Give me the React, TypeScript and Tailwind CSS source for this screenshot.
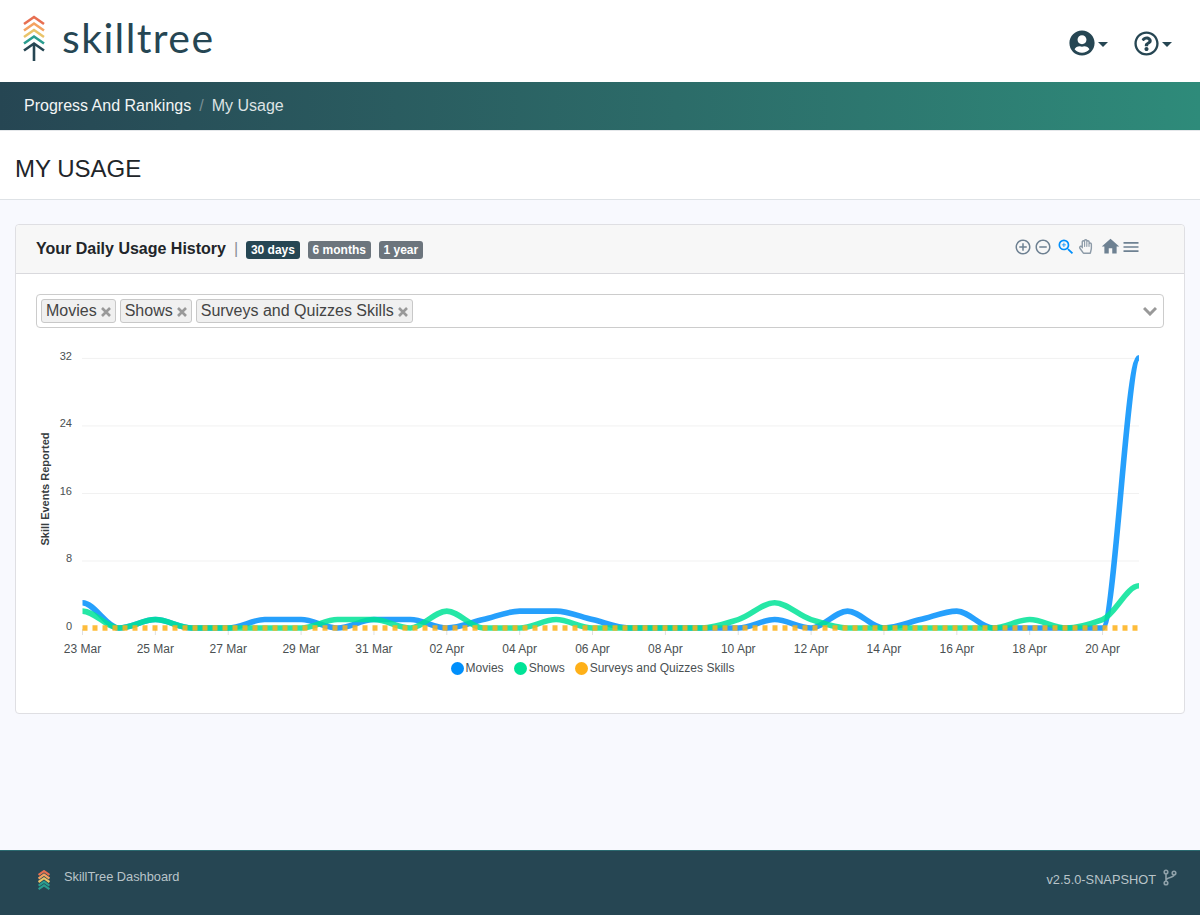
import { FaUserCircle, FaRegQuestionCircle, FaRegHandPaper } from "react-icons/fa";
import { MdOutlineAddCircleOutline, MdOutlineRemoveCircleOutline, MdZoomIn, MdHome, MdMenu } from "react-icons/md";

const X0 = 82.5;
const DX = 36.43;
const Y0 = 628;
const UNIT = 8.44;

const movies = [3, 0, 1, 0, 0, 1, 1, 0, 1, 1, 0, 1, 2, 2, 1, 0, 0, 0, 0, 1, 0, 2, 0, 1, 2, 0, 0, 0, 0, 32];
const shows = [2, 0, 1, 0, 0, 0, 0, 1, 1, 0, 2, 0, 0, 1, 0, 0, 0, 0, 1, 3, 1, 0, 0, 0, 0, 0, 1, 0, 1, 5];

function monotonePath(data: number[]) {
  const pts = data.map((v, i) => [X0 + i * DX, Y0 - v * UNIT]);
  const slopes = pts.slice(1).map((p, i) => (p[1] - pts[i][1]) / DX);
  const tangents = pts.map((_, i) => {
    if (i === 0 || i === pts.length - 1) return 0;
    const a = slopes[i - 1];
    const b = slopes[i];
    if (a * b <= 0) return 0;
    return (2 * a * b) / (a + b);
  });
  let d = `M${pts[0][0]},${pts[0][1]}`;
  for (let i = 1; i < pts.length; i++) {
    const h = DX / 3;
    d += ` C${pts[i - 1][0] + h},${pts[i - 1][1] + tangents[i - 1] * h} ${pts[i][0] - h},${pts[i][1] - tangents[i] * h} ${pts[i][0]},${pts[i][1]}`;
  }
  return d;
}

const xLabels = ["23 Mar", "25 Mar", "27 Mar", "29 Mar", "31 Mar", "02 Apr", "04 Apr", "06 Apr", "08 Apr", "10 Apr", "12 Apr", "14 Apr", "16 Apr", "18 Apr", "20 Apr"];
const yLabels = [32, 24, 16, 8, 0];

function Chevrons({ stem }: { stem?: boolean }) {
  return (
    <>
      <path d="M1 9 L11 2 L21 9" stroke="#E76F51" />
      <path d="M1 15.5 L11 8.5 L21 15.5" stroke="#F4A261" />
      <path d="M1 22 L11 15 L21 22" stroke="#E9C46A" />
      <path d="M1 28.5 L11 21.5 L21 28.5" stroke="#2A9D8F" />
      {stem && <path d="M1 35.5 L11 28.5 L21 35.5 M11 28.5 L11 46" stroke="#264653" />}
    </>
  );
}

function Chart() {
  return (
    <svg width={1128} height={320} viewBox="36 340 1128 320" className="block" fontFamily="'Liberation Sans', Arial, sans-serif">
      {yLabels.slice(0, 4).map((v) => (
        <line key={v} x1={82} x2={1139} y1={Y0 - v * UNIT + 0.5} y2={Y0 - v * UNIT + 0.5} stroke="#f1f1f1" />
      ))}
      {yLabels.map((v) => (
        <text key={v} x={72} y={Y0 - v * UNIT + 1.7} textAnchor="end" fontSize={11} fill="#4a5052">
          {v}
        </text>
      ))}
      <text transform="translate(49 489) rotate(-90)" textAnchor="middle" fontSize={11} fontWeight={700} fill="#373d3f">
        Skill Events Reported
      </text>
      {xLabels.map((l, i) => {
        const x = X0 + i * 2 * DX;
        return (
          <g key={l}>
            <line x1={x} x2={x} y1={629} y2={635} stroke="#e0e0e0" />
            <text x={x} y={653} textAnchor="middle" fontSize={12} fill="#4a5052">
              {l}
            </text>
          </g>
        );
      })}
      <path d={monotonePath(movies)} fill="none" stroke="#008FFB" strokeOpacity={0.85} strokeWidth={5.6} />
      <path d={monotonePath(shows)} fill="none" stroke="#00E396" strokeOpacity={0.85} strokeWidth={5.6} />
      <line x1={X0} x2={1139} y1={Y0} y2={Y0} stroke="#FEB019" strokeOpacity={0.85} strokeWidth={5.5} strokeDasharray="5 5" />
    </svg>
  );
}

function Tag({ label }: { label: string }) {
  return (
    <span className="flex items-center h-[24px] px-[4px] gap-[4px] rounded-[3px] border border-[#c8c8c8] bg-[#f0f0f0] text-[16px] text-[#444]">
      {label}
      <svg width={10} height={10} viewBox="0 0 10 10" fill="none" stroke="#999" strokeWidth={2.6} className="mt-[1px]">
        <path d="M1 1 L9 9 M9 1 L1 9" />
      </svg>
    </span>
  );
}

function Legend({ color, label }: { color: string; label: string }) {
  return (
    <span className="flex items-center gap-[2px]">
      <span className={`w-[13px] h-[13px] rounded-full ${color}`} />
      {label}
    </span>
  );
}

export default function App() {
  return (
    <div className="min-h-[915px] flex flex-col bg-[#f8f9fe] text-[#212529] font-['Liberation_Sans',Arial,sans-serif]">
      <header className="h-[82px] bg-white flex items-center justify-between pl-[23px] pr-[28px]">
        <div className="flex items-center gap-[17px] -mt-[4px]">
          <svg width={22} height={48} viewBox="0 0 22 48" fill="none" strokeWidth={2.6}>
            <Chevrons stem />
          </svg>
          <span className="font-['Lato',sans-serif] font-normal text-[41px] leading-none tracking-[1.4px] text-[#264653] -mt-[3px]">
            skilltree
          </span>
        </div>
        <div className="flex items-center text-[#264653] mt-[4px]">
          <FaUserCircle size={26} />
          <span className="ml-[3px] mt-[3px] w-0 h-0 border-x-[5px] border-x-transparent border-t-[5px] border-t-[#264653]" />
          <FaRegQuestionCircle size={25} className="ml-[26px]" />
          <span className="ml-[3px] mt-[3px] w-0 h-0 border-x-[5px] border-x-transparent border-t-[5px] border-t-[#264653]" />
        </div>
      </header>

      <nav className="h-[49px] flex items-center gap-[8px] px-[24px] bg-gradient-to-r from-[#264653] to-[#2e8b7a] border-b border-[#e4e7ea] text-[16px] text-[#f2f5f5]">
        <span>Progress And Rankings</span>
        <span className="text-[#7a8f95]">/</span>
        <span className="text-[#dde3e4]">My Usage</span>
      </nav>

      <section className="h-[69px] pt-[8px] bg-white border-b border-[#dee2e6] flex items-center px-[15px] text-[24px]">MY USAGE</section>

      <main className="px-[15px] pt-[24px]">
        <div className="bg-white border border-[#dfdfe3] rounded-[4px]">
          <div className="h-[49px] bg-[#f7f7f7] border-b border-[#d9d9dd] flex items-center pl-[20px] rounded-t-[4px]">
            <span className="text-[16px] font-bold">Your Daily Usage History</span>
            <span className="ml-[8px] text-[#8a8f94] text-[16px]">|</span>
            <span className="ml-[8px] h-[18px] px-[4.8px] flex items-center rounded-[3px] bg-[#264653] text-white text-[12px] font-bold mt-[2px]">30 days</span>
            <span className="ml-[8px] h-[18px] px-[4.8px] flex items-center rounded-[3px] bg-[#6c757d] text-white text-[12px] font-bold mt-[2px]">6 months</span>
            <span className="ml-[8px] h-[18px] px-[4.8px] flex items-center rounded-[3px] bg-[#6c757d] text-white text-[12px] font-bold mt-[2px]">1 year</span>
            <div className="ml-auto mr-[43px] -mt-[5px] flex items-center text-[#6e8192]">
              <MdOutlineAddCircleOutline size={18} />
              <MdOutlineRemoveCircleOutline size={18} className="ml-[2px]" />
              <MdZoomIn size={20} className="ml-[4px] text-[#008ffb]" />
              <FaRegHandPaper size={15} className="ml-[2px] text-[#8d9ba8]" />
              <MdHome size={21} className="ml-[7px]" />
              <MdMenu size={20} className="ml-[0px]" />
            </div>
          </div>
          <div className="px-[20px] pt-[20px] pb-[37px]">
            <div className="h-[34px] border border-[#ccc] rounded-[4px] flex items-center gap-[4px] px-[4px]">
              <Tag label="Movies" />
              <Tag label="Shows" />
              <Tag label="Surveys and Quizzes Skills" />
              <svg width={14} height={10} viewBox="0 0 14 10" fill="none" stroke="#999" strokeWidth={3} className="ml-auto mr-[2px]">
                <path d="M1 2 L7 8 L13 2" />
              </svg>
            </div>
            <div className="mt-[12px]">
              <Chart />
            </div>
            <div className="h-[16px] flex items-center justify-center gap-[10px] pr-[15px] text-[12px] text-[#4a5052]">
              <Legend color="bg-[#008ffb]" label="Movies" />
              <Legend color="bg-[#00e396]" label="Shows" />
              <Legend color="bg-[#feb019]" label="Surveys and Quizzes Skills" />
            </div>
          </div>
        </div>
      </main>

      <footer className="mt-auto h-[65px] bg-[#264653] border-t border-[#2a6a70] flex justify-between pl-[38px] pr-[23px] text-[12.8px] text-[#b9c4c9]">
        <div className="flex items-start pt-[16px]">
          <svg width={12} height={23} viewBox="0 0 22 42" fill="none" strokeWidth={4} className="mt-[3px]">
            <Chevrons />
            <path d="M1 35 L11 28 L21 35" stroke="#2A9D8F" />
          </svg>
          <span className="ml-[14px]">SkillTree Dashboard</span>
        </div>
        <div className="flex items-start pt-[18px]">
          <span className="pt-[1px]">v2.5.0-SNAPSHOT</span>
          <svg width={14} height={17} viewBox="0 0 14 17" fill="none" stroke="#8fa1a9" strokeWidth={1.6} className="ml-[7px]">
            <circle cx={3} cy={3} r={1.8} />
            <circle cx={3} cy={14} r={1.8} />
            <circle cx={11} cy={4} r={1.8} />
            <path d="M3 5 L3 12 M11 6 C11 9 3 8 3 11.5" />
          </svg>
        </div>
      </footer>
    </div>
  );
}
